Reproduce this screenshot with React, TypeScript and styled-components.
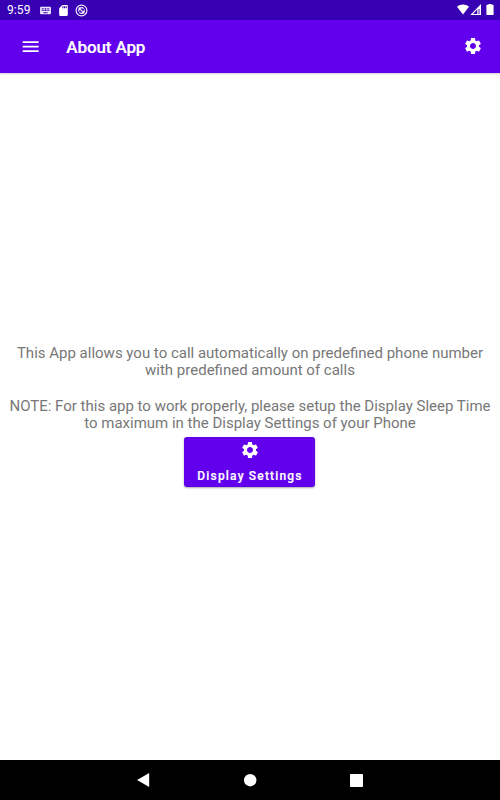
import React from "react";
import styled, { createGlobalStyle } from "styled-components";

const GlobalStyle = createGlobalStyle`
  * { box-sizing: border-box; }
  body { margin: 0; background: #fff; font-family: Roboto, sans-serif; }
`;

const Screen = styled.div`
  width: 500px;
  height: 800px;
  display: flex;
  flex-direction: column;
  background: #fff;
  overflow: hidden;
`;

const StatusBar = styled.header`
  height: 20px;
  flex: none;
  display: flex;
  align-items: center;
  justify-content: space-between;
  padding: 0 5px 0 7px;
  background: #3700b3;
  color: #fff;
`;

const StatusGroup = styled.div`
  display: flex;
  align-items: center;
  gap: 5px;
`;

const Clock = styled.span`
  width: 27px;
  font-size: 12px;
  line-height: 20px;
  letter-spacing: 0.1px;
  white-space: nowrap;
`;

const Toolbar = styled.nav`
  height: 53px;
  flex: none;
  display: flex;
  align-items: center;
  padding: 0 17px 0 20px;
  background: #6200ee;
  color: #fff;
  box-shadow: 0 1px 2px rgba(0, 0, 0, 0.2);
`;

const IconButton = styled.button<{ $lift?: number }>`
  display: flex;
  padding: 0 0 ${(p) => p.$lift ?? 0}px;
  border: 0;
  background: none;
  color: inherit;
`;

const Title = styled.h1`
  flex: 1;
  margin: 0 0 0 25px;
  font-size: 17px;
  line-height: 24px;
  font-weight: 500;
  letter-spacing: -0.12px;
  -webkit-text-stroke: 0.2px currentColor;
`;

const Content = styled.main`
  flex: 1;
  display: flex;
  flex-direction: column;
  align-items: center;
  padding-top: 271.7px;
`;

const Message = styled.p`
  margin: 0;
  color: #777;
  font-size: 15px;
  line-height: 17.65px;
  text-align: center;
  white-space: pre;
`;

const SettingsButton = styled.button`
  width: 131.5px;
  height: 50px;
  margin: 4.1px 1px 0 0;
  padding: 3px 0 0;
  display: flex;
  flex-direction: column;
  align-items: center;
  gap: 8px;
  border: 0;
  border-radius: 3px;
  background: #6200ee;
  color: #fff;
  font: 500 12px/16px Roboto, sans-serif;
  letter-spacing: 1.18px;
  -webkit-text-stroke: 0.2px currentColor;
  box-shadow: 0 1px 2px rgba(0, 0, 0, 0.35);
`;

const ButtonLabel = styled.span`
  padding-left: 1px;
`;

const NavigationBar = styled.footer`
  height: 40px;
  flex: none;
  display: flex;
  align-items: center;
  justify-content: center;
  gap: 93px;
  padding-right: 1px;
  background: #000;
`;

const Gear = () => (
  <svg width="20" height="20" viewBox="0 0 24 24" fill="currentColor">
    <path d="M19.14 12.94c.04-.3.06-.61.06-.94 0-.32-.02-.64-.07-.94l2.03-1.58c.18-.14.23-.41.12-.61l-1.92-3.32c-.12-.22-.37-.29-.59-.22l-2.39.96c-.5-.38-1.03-.7-1.62-.94l-.36-2.54c-.04-.24-.24-.41-.48-.41h-3.84c-.24 0-.43.17-.47.41l-.36 2.54c-.59.24-1.13.57-1.62.94l-2.39-.96c-.22-.08-.47 0-.59.22L2.74 8.87c-.12.21-.08.47.12.61l2.03 1.58c-.05.3-.09.63-.09.94s.02.64.07.94l-2.03 1.58c-.18.14-.23.41-.12.61l1.92 3.32c.12.22.37.29.59.22l2.39-.96c.5.38 1.03.7 1.62.94l.36 2.54c.05.24.24.41.48.41h3.84c.24 0 .44-.17.47-.41l.36-2.54c.59-.24 1.13-.56 1.62-.94l2.39.96c.22.08.47 0 .59-.22l1.92-3.32c.12-.22.07-.47-.12-.61l-2.01-1.58zM12 15.6c-1.98 0-3.6-1.62-3.6-3.6s1.62-3.6 3.6-3.6 3.6 1.62 3.6 3.6-1.62 3.6-3.6 3.6z" />
  </svg>
);

const MenuIcon = () => (
  <svg width="21.3" height="21.3" viewBox="0 0 24 24" fill="currentColor">
    <path d="M3 18h18v-2H3v2zm0-5h18v-2H3v2zm0-7v2h18V6H3z" />
  </svg>
);

const KeyboardIcon = () => (
  <svg width="13" height="13" viewBox="0 0 24 24" fill="#eee9fa">
    <path d="M20 5H4c-1.1 0-2 .9-2 2v10c0 1.1.9 2 2 2h16c1.1 0 2-.9 2-2V7c0-1.1-.9-2-2-2zm-9 3h2v2h-2V8zm0 3h2v2h-2v-2zM8 8h2v2H8V8zm0 3h2v2H8v-2zm-1 2H5v-2h2v2zm0-3H5V8h2v2zm9 7H8v-2h8v2zm0-4h-2v-2h2v2zm0-3h-2V8h2v2zm3 3h-2v-2h2v2zm0-3h-2V8h2v2z" />
  </svg>
);

const CardIcon = () => (
  <svg width="13" height="13" viewBox="0 0 24 24" fill="#fff">
    <path d="M18 2h-8L4 8v12c0 1.1.9 2 2 2h12c1.1 0 2-.9 2-2V4c0-1.1-.9-2-2-2zm-6 6h-2V4h2v4zm3 0h-2V4h2v4zm3 0h-2V4h2v4z" />
  </svg>
);

const SyncIcon = () => (
  <svg width="13" height="13" viewBox="0 0 13 13" fill="none" stroke="#eee9fa">
    <circle cx="6.5" cy="6.5" r="5.4" strokeWidth="1.2" />
    <path d="M3.8 7.5A3 3 0 0 1 8.8 4.6M9.2 5.5A3 3 0 0 1 4.2 8.4M4 4.1l5 4.8" strokeWidth="1.25" />
    <path d="M3.4 3.6h3L4 6zM9.6 9.4h-3L9 7z" fill="#eee9fa" stroke="none" />
  </svg>
);

const SignalIcons = () => (
  <svg width="38" height="12" viewBox="0 0 38 12" fill="#fff">
    <path d="M0 2.8C3.3-.4 8.7-.4 12 2.8L6 10.6z" />
    <path d="M13.3 11 24 .1V11zM16 9.9h4.300V5.500z" fillRule="evenodd" />
    <path d="M21.300 5h1.500v5h-1.500z" fill="#8969d0" />
    <path d="M31.5-.4h3v1.2H36q.6 0 .6.6v9q0 .6-.6.6h-6q-.6 0-.6-.6v-9Q29.4.8 30 .8h1.5z" />
  </svg>
);

export default function App() {
  return (
    <>
      <GlobalStyle />
      <Screen>
        <StatusBar>
          <StatusGroup>
            <Clock>9:59</Clock>
            <KeyboardIcon />
            <CardIcon />
            <SyncIcon />
          </StatusGroup>
          <SignalIcons />
        </StatusBar>
        <Toolbar>
          <IconButton aria-label="Open menu"><MenuIcon /></IconButton>
          <Title>About App</Title>
          <IconButton aria-label="Settings" $lift={1}><Gear /></IconButton>
        </Toolbar>
        <Content>
          <Message>
            {"This App allows you to call automatically on predefined phone number\nwith predefined amount of calls\n\nNOTE: For this app to work properly, please setup the Display Sleep Time\nto maximum in the Display Settings of your Phone"}
          </Message>
          <SettingsButton>
            <Gear />
            <ButtonLabel>Display Settings</ButtonLabel>
          </SettingsButton>
        </Content>
        <NavigationBar>
          <svg width="14" height="14" viewBox="0 0 14 14" fill="#fff"><path d="M12.2 0v14L0 7z" /></svg>
          <svg width="13" height="13" viewBox="0 0 13 13" fill="#fff"><circle cx="6.2" cy="6.2" r="6.2" /></svg>
          <svg width="13" height="13" viewBox="0 0 13 13" fill="#fff"><rect width="13" height="13" rx=".7" /></svg>
        </NavigationBar>
      </Screen>
    </>
  );
}
